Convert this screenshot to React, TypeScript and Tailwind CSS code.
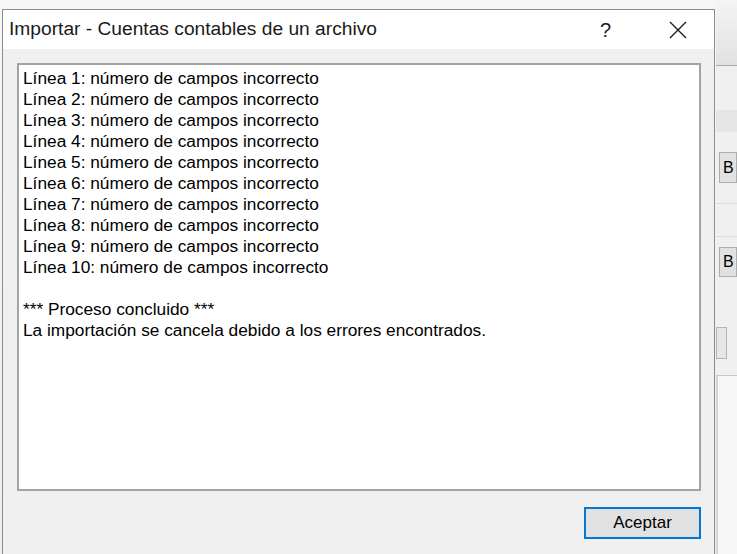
import React from 'react';

const lines = [
  'Línea 1: número de campos incorrecto',
  'Línea 2: número de campos incorrecto',
  'Línea 3: número de campos incorrecto',
  'Línea 4: número de campos incorrecto',
  'Línea 5: número de campos incorrecto',
  'Línea 6: número de campos incorrecto',
  'Línea 7: número de campos incorrecto',
  'Línea 8: número de campos incorrecto',
  'Línea 9: número de campos incorrecto',
  'Línea 10: número de campos incorrecto',
  '',
  '*** Proceso concluido ***',
  'La importación se cancela debido a los errores encontrados.',
];

// background window strip peeking out on the right
function BackWindow() {
  return (
    <div className="flex w-[21px] flex-col">
      <div className="h-[65px] bg-gradient-to-b from-[#f4f4f4] to-[#e2e2e2]" />
      <div className="h-[1px] bg-[#a9a9a9]" />
      <div className="h-[44px] bg-[#f0f0f0]" />
      <div className="h-[22px] bg-[#e6e6e6]" />
      <div className="h-[20px] bg-[#f0f0f0]" />
      <div className="ml-[3px] flex h-[31px] items-center border border-[#adadad] bg-[#e1e1e1] pl-[3px] text-[16px] leading-none text-black">
        B
      </div>
      <div className="h-[20px] bg-[#f0f0f0]" />
      <div className="h-[1px] bg-[#dcdcdc]" />
      <div className="h-[32px] bg-[#f0f0f0]" />
      <div className="h-[1px] bg-[#dcdcdc]" />
      <div className="h-[10px] bg-[#f0f0f0]" />
      <div className="ml-[3px] flex h-[30px] items-center border border-[#adadad] bg-[#e1e1e1] pl-[3px] text-[16px] leading-none text-black">
        B
      </div>
      <div className="h-[50px] bg-[#f0f0f0]" />
      <div className="flex h-[32px]">
        <div className="w-[11px] border border-[#b4b4b4] bg-[#e6e6e6]" />
      </div>
      <div className="h-[16px] bg-[#f0f0f0]" />
      <div className="h-[1px] bg-[#c8c8c8]" />
      <div className="flex-1 border-l-2 border-[#d4d4d4] bg-[#f6f6f6]" />
    </div>
  );
}

export default function App() {
  return (
    <div
      className="flex h-[554px] w-[737px] overflow-hidden bg-[#f0f0f0]"
      style={{ fontFamily: '"Liberation Sans", Arial, sans-serif' }}
    >
      <div className="flex w-[716px] flex-col bg-gradient-to-b from-[#f6f6f6] to-[#eeeeee] pt-[9px] pl-[2px]">
        <div className="flex w-[713px] flex-1 flex-col border border-b-0 border-[#8c8c8c]">
          {/* title bar */}
          <div className="flex h-[39px] items-center bg-white pl-[6px] pr-[20px]">
            <span className="flex-1 text-[19.2px] text-[#1a1a1a]">Importar - Cuentas contables de un archivo</span>
            <span className="mr-[58px] text-[20px] text-[#1a1a1a]">?</span>
            <svg width="18" height="18" viewBox="0 0 18 18" className="mr-[7px]">
              <path d="M1 1 L17 17 M17 1 L1 17" stroke="#1a1a1a" strokeWidth="1.3" />
            </svg>
          </div>

          {/* body */}
          <div className="flex flex-1 flex-col bg-[#f0f0f0] pt-[14px] pl-[14px]">
            <div className="h-[428px] w-[684px] border-2 border-[#a3a3a3] bg-white pt-[3px] pl-[4px] text-[17.3px] leading-[21px] text-black">
              {lines.map((l, i) => (
                <div key={i} className="h-[21px] whitespace-pre">
                  {l}
                </div>
              ))}
            </div>
            <div className="flex justify-end pt-[16px] pr-[13px]">
              <button className="h-[32px] w-[117px] border-2 border-[#0078d7] bg-[#e1e1e1] text-[17px] text-black">
                Aceptar
              </button>
            </div>
          </div>
        </div>
      </div>
      <BackWindow />
    </div>
  );
}
